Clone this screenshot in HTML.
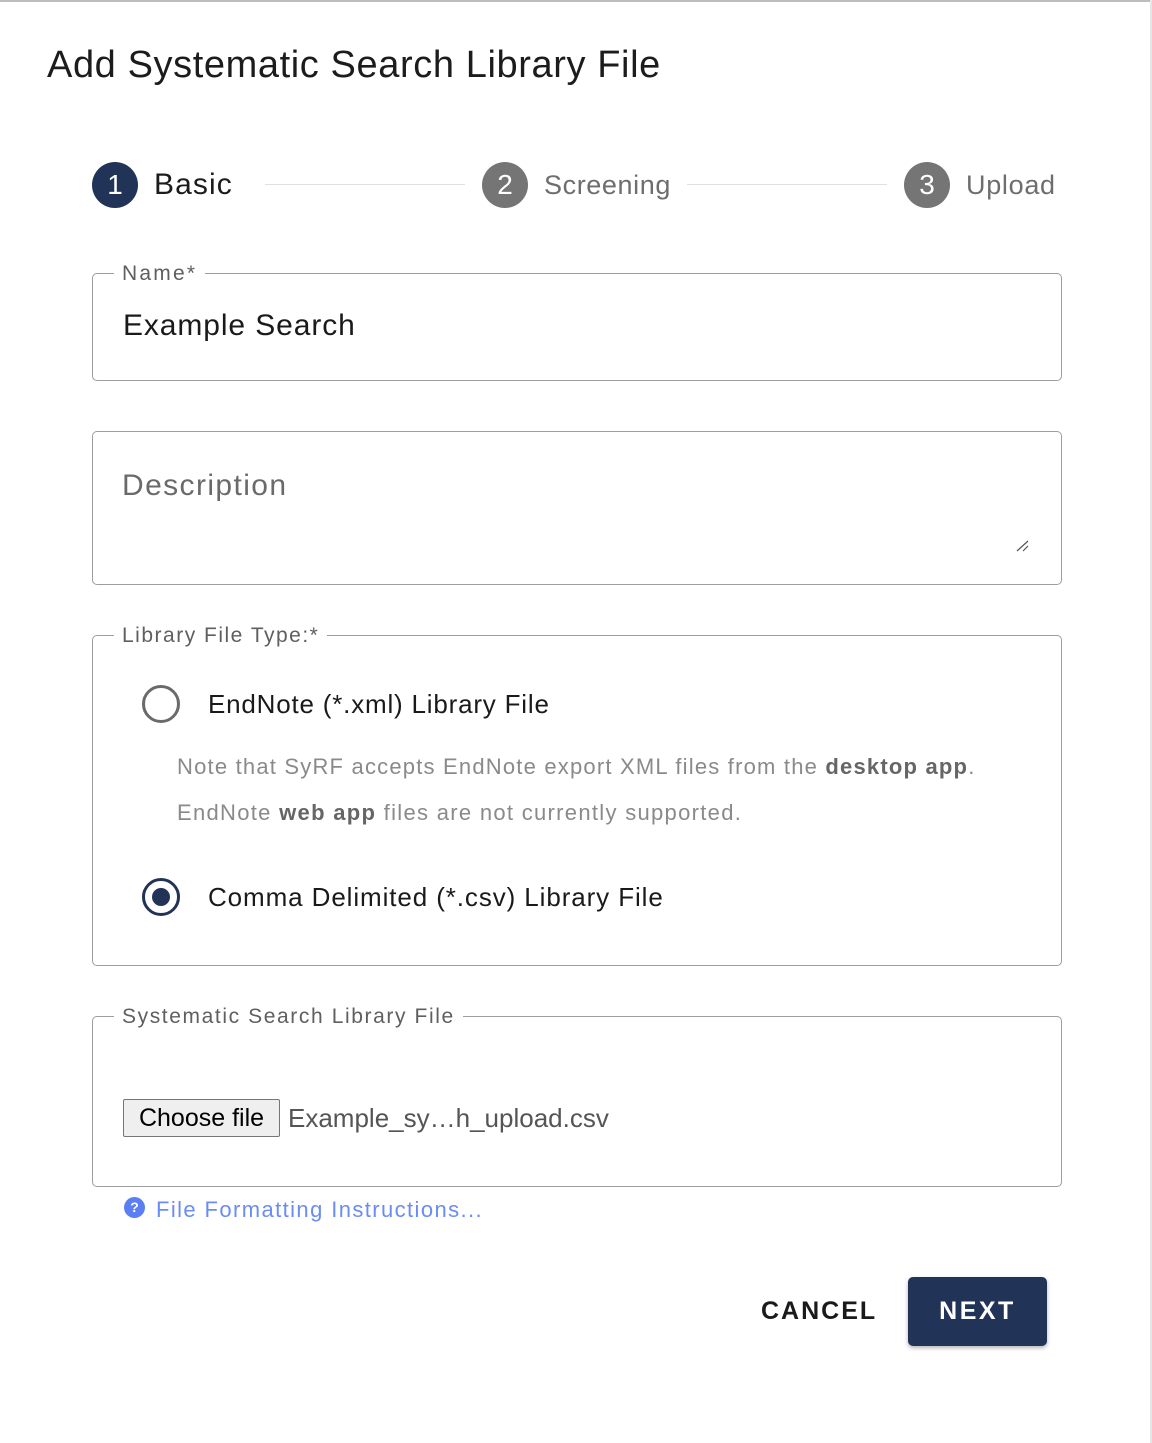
<!DOCTYPE html>
<html><head><meta charset="utf-8"><style>
*{margin:0;padding:0;box-sizing:border-box}
body{width:1152px;height:1443px;background:#fff;position:relative;overflow:hidden;font-family:"Liberation Sans",Arial,sans-serif;color:#1a1a1a}
.a{position:absolute;white-space:nowrap}
.box{position:absolute;border:1.5px solid #9e9e9e;border-radius:5px}
.lg{position:absolute;background:#fff;padding:0 8px;color:#5f5f5f;font-size:21px;line-height:24px;letter-spacing:1.5px}
.circ{position:absolute;width:46px;height:46px;border-radius:50%;color:#fff;font-size:28px;line-height:46px;text-align:center}
.line{position:absolute;height:1px;background:#e0e0e0;top:184px}
.radio{position:absolute;width:38px;height:38px;border-radius:50%;border:3px solid #6a6a6a}
</style></head><body>
<div style="position:absolute;left:0;top:0;width:1152px;height:2px;background:#bdbdbd"></div>
<div style="position:absolute;right:0;top:0;width:2px;height:1443px;background:#e6e6e6"></div>
<div class="a" style="left:47px;top:43px;font-size:38px;line-height:44px;color:#1c1c1c;letter-spacing:.6px">Add Systematic Search Library File</div>

<div class="circ" style="left:92px;top:162px;background:#213356">1</div>
<div class="a" style="left:154px;top:167px;font-size:30px;line-height:36px;color:#1c1c1c;letter-spacing:1.1px">Basic</div>
<div class="line" style="left:265px;width:200px"></div>
<div class="circ" style="left:482px;top:162px;background:#757575">2</div>
<div class="a" style="left:544px;top:167px;font-size:27px;line-height:36px;color:#6e6e6e;letter-spacing:.6px">Screening</div>
<div class="line" style="left:687px;width:200px"></div>
<div class="circ" style="left:904px;top:162px;background:#757575">3</div>
<div class="a" style="left:966px;top:167px;font-size:27px;line-height:36px;color:#6e6e6e;letter-spacing:.7px">Upload</div>

<div class="box" style="left:92px;top:273px;width:970px;height:108px"></div>
<div class="lg" style="left:114px;top:262px;letter-spacing:2.2px">Name*</div>
<div class="a" style="left:123px;top:308px;font-size:30px;line-height:36px;letter-spacing:.9px">Example Search</div>

<div class="box" style="left:92px;top:431px;width:970px;height:154px"></div>
<div class="a" style="left:122px;top:468px;font-size:30px;line-height:36px;color:#6a6a6a;letter-spacing:1.4px">Description</div>
<svg class="a" style="left:1015px;top:539px" width="16" height="14"><path d="M2 12L13 2M8 12L13 7" stroke="#555" stroke-width="1.2"/></svg>

<div class="box" style="left:92px;top:635px;width:970px;height:331px"></div>
<div class="lg" style="left:114px;top:624px">Library File Type:*</div>
<div class="radio" style="left:142px;top:685px"></div>
<div class="a" style="left:208px;top:688px;font-size:26px;line-height:32px;letter-spacing:.8px">EndNote (*.xml) Library File</div>
<div class="a" style="left:177px;top:753px;font-size:22px;line-height:28px;color:#8a8a8a;letter-spacing:1.2px">Note that SyRF accepts EndNote export XML files from the <b style="color:#666">desktop app</b>.</div>
<div class="a" style="left:177px;top:799px;font-size:22px;line-height:28px;color:#8a8a8a;letter-spacing:1.3px">EndNote <b style="color:#666">web app</b> files are not currently supported.</div>
<div class="radio" style="left:142px;top:878px;border-color:#213356"><div style="position:absolute;left:7px;top:7px;width:18px;height:18px;border-radius:50%;background:#213356"></div></div>
<div class="a" style="left:208px;top:881px;font-size:26px;line-height:32px;letter-spacing:.9px">Comma Delimited (*.csv) Library File</div>

<div class="box" style="left:92px;top:1016px;width:970px;height:171px"></div>
<div class="lg" style="left:114px;top:1005px;letter-spacing:1.6px">Systematic Search Library File</div>
<div class="a" style="left:123px;top:1099px;width:157px;height:38px;border:1px solid #767676;border-radius:2px;background:#efefef;font-size:25px;line-height:36px;text-align:center;color:#000">Choose file</div>
<div class="a" style="left:288px;top:1102px;font-size:26px;line-height:32px;color:#555">Example_sy…h_upload.csv</div>

<div class="a" style="left:124px;top:1197px;width:21px;height:21px;border-radius:50%;background:#5b7ff2;color:#fff;font-size:14px;font-weight:bold;line-height:21px;text-align:center">?</div>
<div class="a" style="left:156px;top:1196px;font-size:22px;line-height:28px;color:#6b8cf5;letter-spacing:1.4px">File Formatting Instructions...</div>

<div class="a" style="left:761px;top:1295px;font-size:25px;line-height:32px;font-weight:bold;letter-spacing:2px;color:#1a1a1a">CANCEL</div>
<div class="a" style="left:908px;top:1277px;width:139px;height:69px;border-radius:5px;background:#213356;box-shadow:0 2px 4px rgba(0,0,0,.3);color:#fff;font-size:25px;font-weight:bold;letter-spacing:2.5px;line-height:69px;text-align:center">NEXT</div>
</body></html>
